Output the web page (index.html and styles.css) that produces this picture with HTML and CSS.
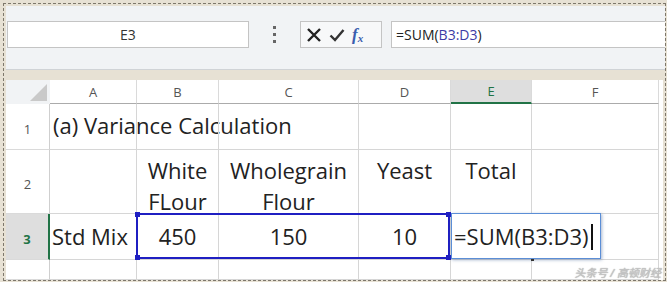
FILE: index.html
```html
<!DOCTYPE html>
<html lang="en">
<head>
    <meta charset="UTF-8">
    <title>Variance Calculation</title>
    <link rel="stylesheet" href="styles.css">
</head>
<body>
    <div class="frame">
        <div class="formula-bar">
            <div class="name-box">E3</div>
            <div class="dots"><span></span><span></span><span></span></div>
            <div class="fx-buttons">
                <svg class="icon" width="16" height="16" viewBox="0 0 16 16"><path d="M2 2 L14 14 M14 2 L2 14" stroke="#222" stroke-width="2.4" fill="none"/></svg>
                <svg class="icon" width="16" height="16" viewBox="0 0 16 16"><path d="M1.5 8.5 L6 13 L14.5 3" stroke="#333" stroke-width="2.4" fill="none"/></svg>
                <span class="fx"><i>f</i><sub>x</sub></span>
            </div>
            <div class="formula-input">=SUM(<span class="ref">B3:D3</span>)</div>
        </div>

        <div class="sheet">
            <div class="hdr corner"><span class="tri"></span></div>
            <div class="hdr">A</div>
            <div class="hdr">B</div>
            <div class="hdr">C</div>
            <div class="hdr">D</div>
            <div class="hdr active-col">E</div>
            <div class="hdr">F</div>

            <div class="rowhdr">1</div>
            <div class="cell title">(a) Variance Calculation</div>
            <div class="cell"></div>
            <div class="cell"></div>
            <div class="cell"></div>
            <div class="cell"></div>
            <div class="cell"></div>

            <div class="rowhdr">2</div>
            <div class="cell"></div>
            <div class="cell top">White<br>FLour</div>
            <div class="cell top">Wholegrain<br>Flour</div>
            <div class="cell top">Yeast</div>
            <div class="cell top">Total</div>
            <div class="cell"></div>

            <div class="rowhdr active-row">3</div>
            <div class="cell left mark">Std Mix</div>
            <div class="cell mid">450</div>
            <div class="cell mid">150</div>
            <div class="cell mid">10</div>
            <div class="cell"></div>
            <div class="cell"></div>

            <div class="rowhdr"></div>
            <div class="cell"></div>
            <div class="cell"></div>
            <div class="cell"></div>
            <div class="cell"></div>
            <div class="cell"></div>
            <div class="cell"></div>

            <div class="range">
                <span class="handle h-tl"></span>
                <span class="handle h-bl"></span>
                <span class="handle h-tr"></span>
                <span class="handle h-br"></span>
            </div>
            <div class="editor">=SUM(B3:D3)<span class="caret"></span></div>
            <span class="tick"></span>
        </div>
        <div class="watermark">头条号 / 高顿财经</div>
    </div>
</body>
</html>
```

FILE: styles.css
```css
body {
    margin: 0;
    background: #e7e1d4;
    font-family: "Open Sans", "Noto Sans CJK SC", sans-serif;
}
.frame {
    position: relative;
    margin: 3px;
    width: 657px;
    height: 272px;
    border: 1px dashed #7d776b;
    padding: 2px 2px 2px 2px;
    overflow: hidden;
}
.formula-bar {
    height: 64px;
    background: #f1f3f5;
    border-bottom: 1px solid #d0d3d6;
    display: flex;
    align-items: center;
    padding: 0 0 6px 1px;
    box-sizing: border-box;
    margin-right: -3px;
}
.name-box {
    width: 240px;
    height: 25px;
    background: #fff;
    border: 1px solid #c4c4c4;
    font-size: 14px;
    color: #333;
    display: flex;
    align-items: center;
    justify-content: center;
}
.dots {
    width: 51px;
    display: flex;
    flex-direction: column;
    align-items: center;
    gap: 4px;
}
.dots span {
    width: 3px;
    height: 3px;
    background: #666;
}
.fx-buttons {
    width: 75px;
    height: 25px;
    border: 1px solid #c4c4c4;
    background: #f7f8f9;
    display: flex;
    align-items: center;
    gap: 7px;
    padding-left: 5px;
    box-sizing: content-box;
}
.fx {
    font-family: "Liberation Serif", serif;
    color: #3a5dae;
    font-size: 17px;
    font-weight: bold;
    line-height: 1;
}
.fx sub {
    font-size: 11px;
    font-style: italic;
    vertical-align: -2px;
}
.formula-input {
    margin-left: 9px;
    flex: 1;
    height: 25px;
    background: #fff;
    border: 1px solid #c4c4c4;
    font-size: 14px;
    color: #222;
    display: flex;
    align-items: center;
    padding-left: 4px;
}
.ref {
    color: #3c3ca6;
}
.sheet {
    position: relative;
    margin-top: 10px;
    display: grid;
    grid-template-columns: 44px 87px 82px 140px 92px 81px 127px;
    grid-template-rows: 24px 46px 64px 46px 20px;
    background: #fff;
}
.hdr {
    font-size: 13px;
    color: #555;
    display: flex;
    align-items: center;
    justify-content: center;
    border-right: 1px solid #dadada;
    border-bottom: 1px solid #ababab;
    box-sizing: border-box;
}
.corner {
    position: relative;
    background: #f1f3f5;
    border-right: none;
    border-bottom: none;
}
.tri {
    position: absolute;
    right: 3px;
    bottom: 3px;
    width: 0;
    height: 0;
    border-left: 17px solid transparent;
    border-bottom: 17px solid #c9c9c9;
}
.active-col {
    background: #dedede;
    color: #217346;
    border-bottom: 2px solid #217346;
}
.rowhdr {
    font-size: 13px;
    color: #555;
    display: flex;
    align-items: center;
    justify-content: center;
    border-right: 1px solid #cfcfcf;
    border-bottom: 1px solid #dadada;
    box-sizing: border-box;
    padding-top: 4px;
}
.active-row {
    background: #dedede;
    color: #217346;
    font-weight: bold;
    border-right: 2px solid #217346;
}
.cell {
    font-size: 22px;
    color: #222;
    border-right: 1px solid #d6d6d6;
    border-bottom: 1px solid #d6d6d6;
    box-sizing: border-box;
    white-space: nowrap;
    line-height: 28px;
}
.title {
    padding: 7px 0 0 3px;
}
.top {
    text-align: center;
    line-height: 31px;
    padding-top: 5px;
}
.mid {
    text-align: center;
    padding-top: 8px;
}
.left {
    padding: 8px 0 0 2px;
}
.range {
    position: absolute;
    left: 130px;
    top: 133px;
    width: 314px;
    height: 46px;
    border: 2px solid #1f1fc2;
    box-sizing: border-box;
}
.handle {
    position: absolute;
    width: 5px;
    height: 5px;
    background: #1f1fc2;
}
.h-tl { left: -3px; top: -3px; }
.h-bl { left: -3px; bottom: -3px; }
.h-tr { right: -3px; top: -3px; }
.h-br { right: -3px; bottom: -3px; }
.editor {
    position: absolute;
    left: 445px;
    top: 133px;
    width: 150px;
    height: 46px;
    background: #fff;
    border: 1px solid #5b8ed6;
    box-shadow: 1px 1px 3px rgba(80, 110, 160, 0.5);
    box-sizing: border-box;
    font-size: 22px;
    line-height: 28px;
    color: #222;
    padding: 8px 0 0 2px;
    white-space: nowrap;
}
.caret {
    display: inline-block;
    width: 2px;
    height: 26px;
    background: #111;
    vertical-align: -5px;
    margin-left: 2px;
}
.tick {
    position: absolute;
    left: 525px;
    top: 179px;
    width: 3px;
    height: 2px;
    background: #333;
}
.watermark {
    position: absolute;
    right: 4px;
    bottom: 0;
    font-size: 11px;
    color: #c8c8c8;
    font-style: italic;
    text-shadow: 0 0 1px #888;
}
```
